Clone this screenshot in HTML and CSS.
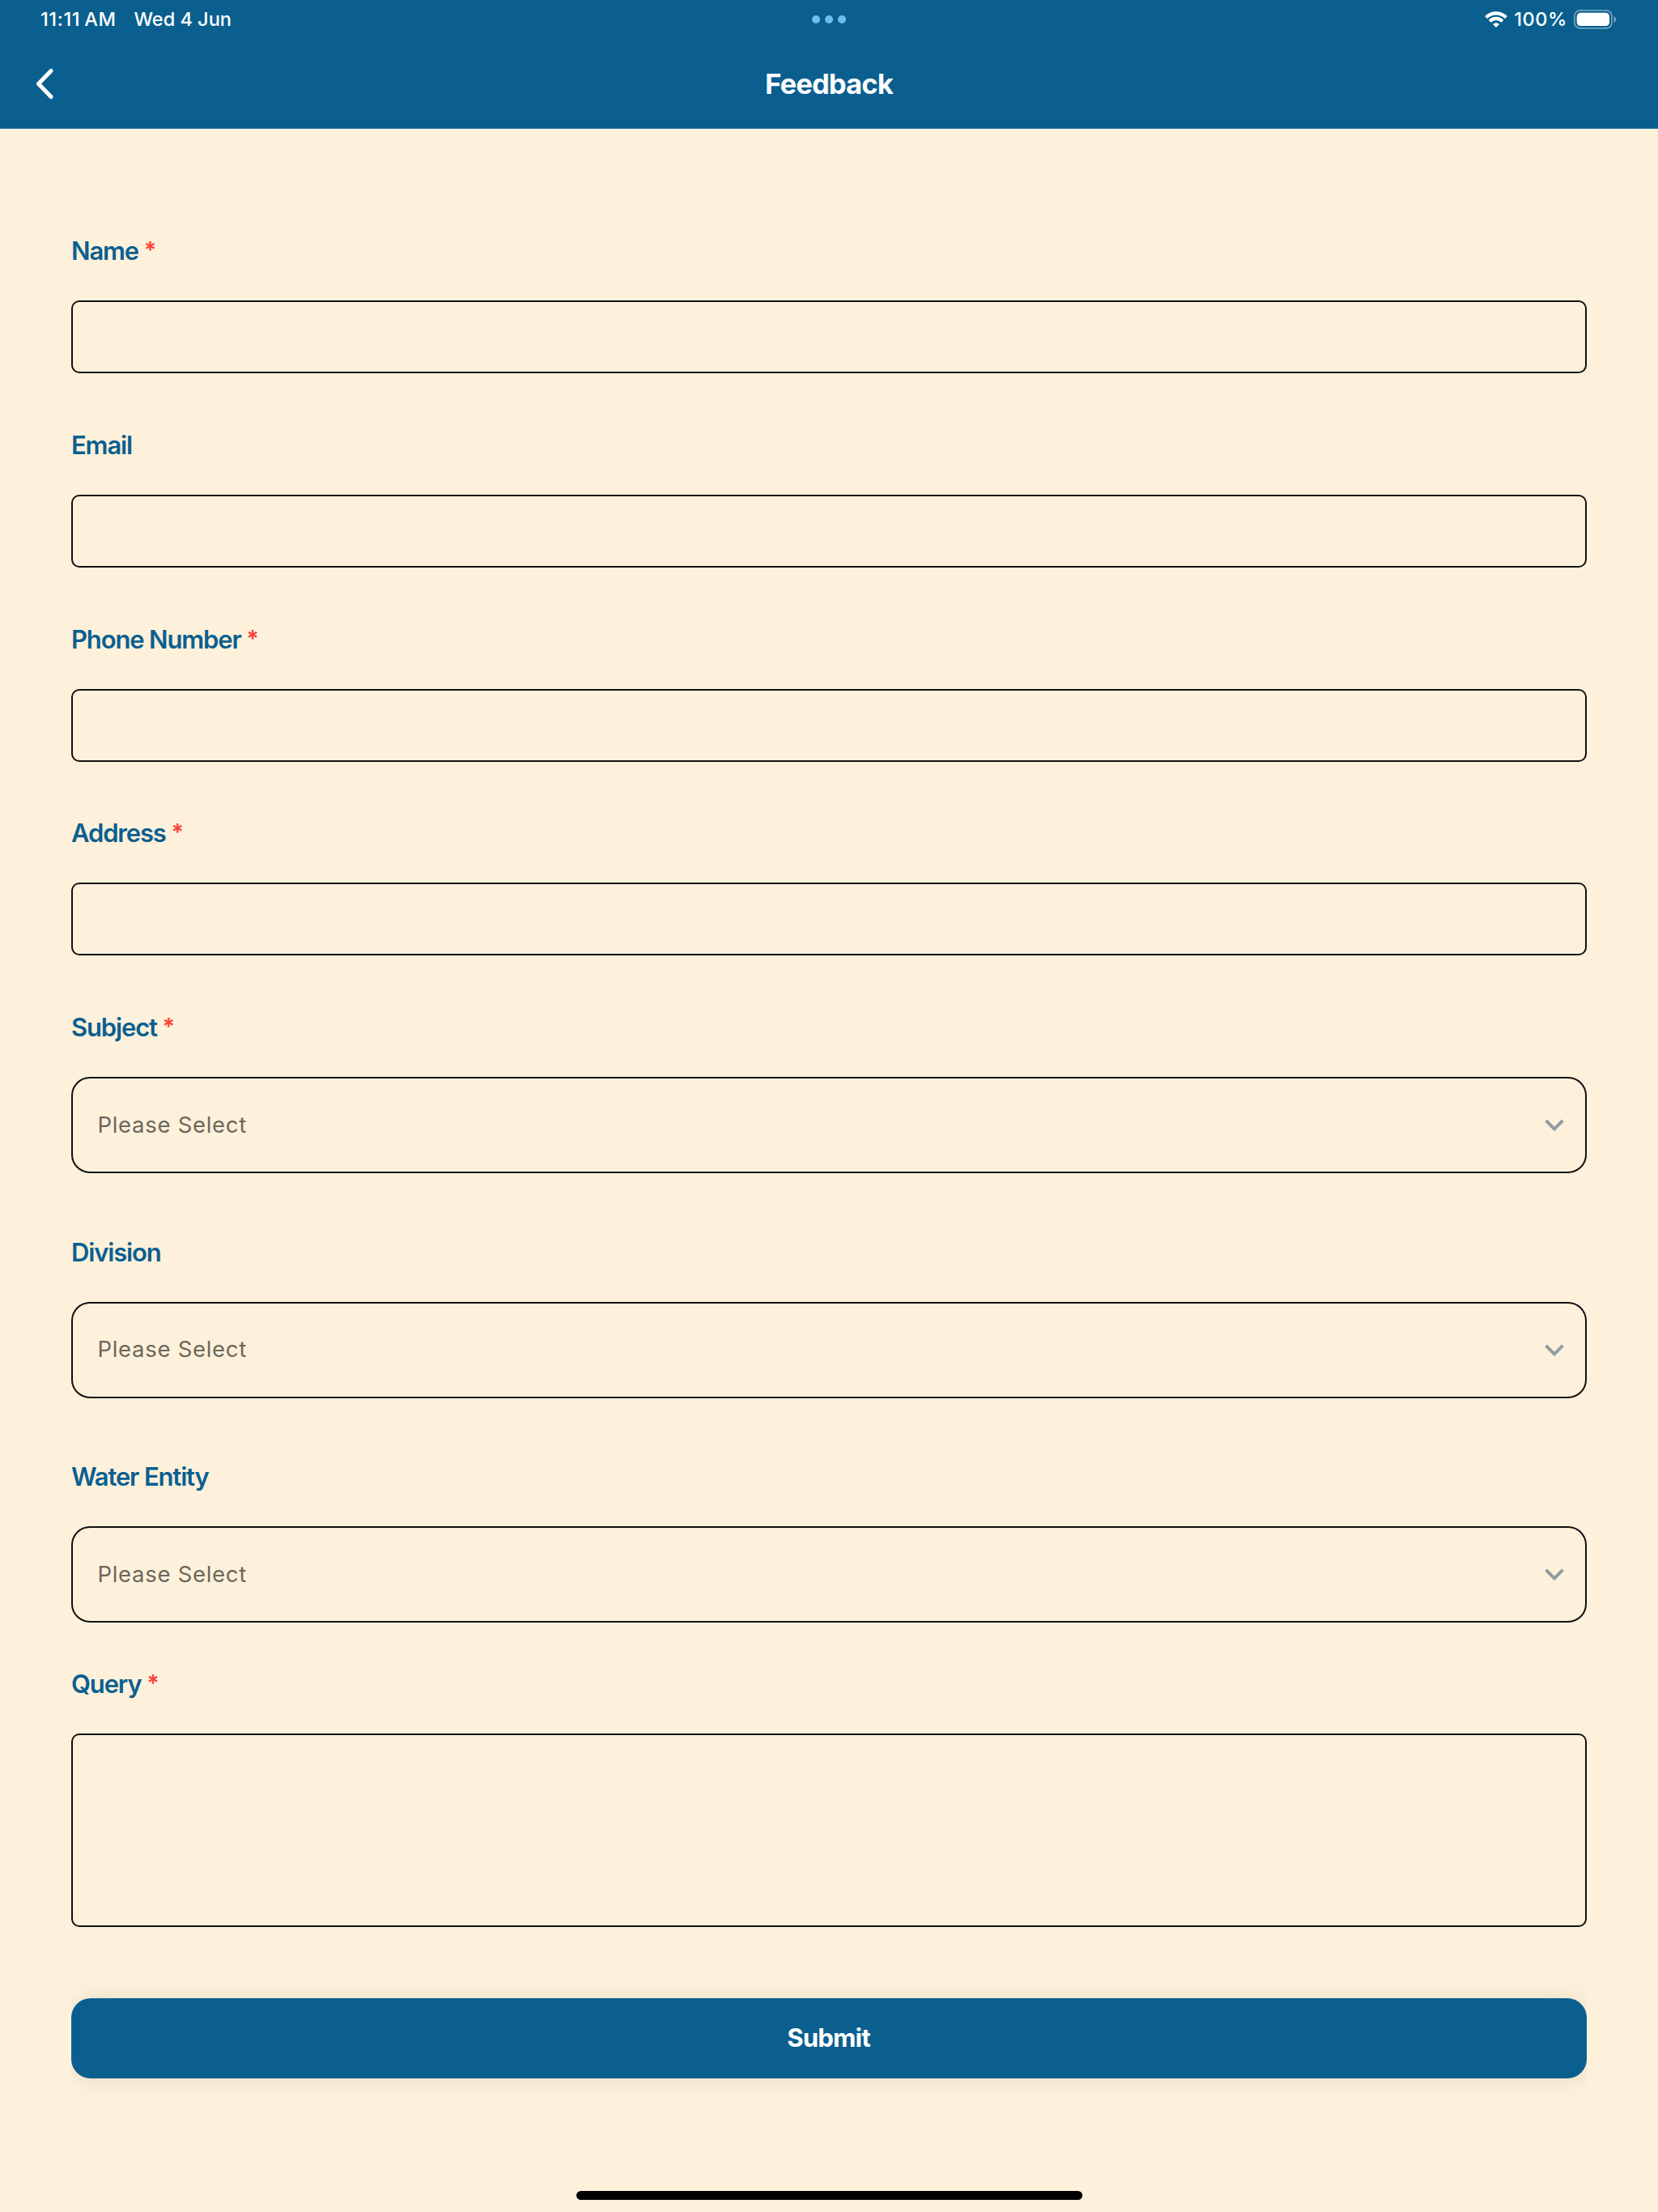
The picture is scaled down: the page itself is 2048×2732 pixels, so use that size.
FILE: index.html
```
<!DOCTYPE html>
<html lang="en">
<head>
    <meta charset="UTF-8">
    <meta name="viewport" content="width=device-width, initial-scale=1.0">
    <title>Feedback</title>
    <link rel="stylesheet" href="styles.css">
</head>
<body>
    <header class="header">
        <div class="status-bar">
            <div class="status-left">
                <span class="status-time">11:11<span class="status-ampm">AM</span></span>
                <span class="status-date">Wed 4 Jun</span>
            </div>
            <div class="status-dots">
                <span class="dot"></span>
                <span class="dot"></span>
                <span class="dot"></span>
            </div>
            <div class="status-right">
                <svg class="wifi-icon" width="28" height="20" viewBox="0 0 28 20" fill="none" stroke="#fff" stroke-width="4.2">
                    <path d="M1.6 7.4 A17.6 17.6 0 0 1 26.4 7.4"/>
                    <path d="M6.2 12.2 A11 11 0 0 1 21.8 12.2"/>
                    <path d="M14 20 L10 15.9 A5.6 5.6 0 0 1 18 15.9 Z" fill="#fff" stroke="none"/>
                </svg>
                <span class="status-percent">100%</span>
                <svg class="battery-icon" width="53" height="24" viewBox="0 0 53 24">
                    <rect x="0.9" y="0.9" width="46" height="22" rx="7" fill="none" stroke="#fff" stroke-opacity="0.42" stroke-width="1.7"/>
                    <rect x="3.7" y="3.8" width="40.3" height="16.3" rx="4.6" fill="#fff"/>
                    <path d="M49.5 8.3 C53.1 9.6 53.1 14.4 49.5 15.7 Z" fill="#fff" fill-opacity="0.45"/>
                </svg>
            </div>
        </div>
        <div class="nav-bar">
            <button class="back-button" aria-label="Back">
                <svg width="24" height="40" viewBox="0 0 24 40" fill="none" stroke="#fff" stroke-width="5" stroke-linecap="round" stroke-linejoin="round">
                    <path d="M20 3.4 L4.5 19.5 L20 35.6"/>
                </svg>
            </button>
            <h1 class="title">Feedback</h1>
        </div>
    </header>

    <form class="feedback-form">
        <div class="field">
            <label for="name">Name <span class="required">*</span></label>
            <input type="text" id="name">
        </div>

        <div class="field">
            <label for="email">Email</label>
            <input type="text" id="email">
        </div>

        <div class="field">
            <label for="phone">Phone Number <span class="required">*</span></label>
            <input type="text" id="phone">
        </div>

        <div class="field">
            <label for="address">Address <span class="required">*</span></label>
            <input type="text" id="address">
        </div>

        <div class="field field-select">
            <label>Subject <span class="required">*</span></label>
            <div class="dropdown">
                <span>Please Select</span>
                <svg class="chevron" width="24" height="16" viewBox="0 0 24 16"><path d="M1.6 1.9 L12 12.3 L22.4 1.9"/></svg>
            </div>
        </div>

        <div class="field field-select">
            <label>Division</label>
            <div class="dropdown">
                <span>Please Select</span>
                <svg class="chevron" width="24" height="16" viewBox="0 0 24 16"><path d="M1.6 1.9 L12 12.3 L22.4 1.9"/></svg>
            </div>
        </div>

        <div class="field field-last-select">
            <label>Water Entity</label>
            <div class="dropdown">
                <span>Please Select</span>
                <svg class="chevron" width="24" height="16" viewBox="0 0 24 16"><path d="M1.6 1.9 L12 12.3 L22.4 1.9"/></svg>
            </div>
        </div>

        <div class="field field-query">
            <label for="query">Query <span class="required">*</span></label>
            <textarea id="query"></textarea>
        </div>

        <button type="button" class="submit-button">Submit</button>
    </form>

    <div class="home-indicator"></div>
</body>
</html>
```
FILE: styles.css
```
* {
    box-sizing: border-box;
}
body {
    font-family: Inter, "Liberation Sans", sans-serif;
    margin: 0;
    height: 2732px;
    display: flex;
    flex-direction: column;
    background-color: #fef1db;
    overflow: hidden;
}
.header {
    height: 159px;
    background-color: #0b5f8f;
    color: #fff;
}
.status-bar {
    display: grid;
    grid-template-columns: 1fr auto 1fr;
    align-items: center;
    height: 48px;
    padding: 0 51px 0 50px;
    font-size: 23.5px;
    font-weight: 500;
    line-height: 48px;
}
.status-left {
    display: flex;
    gap: 22px;
}
.status-time {
    letter-spacing: 0.6px;
}
.status-ampm {
    margin-left: 5px;
}
.status-dots {
    display: flex;
    gap: 6px;
}
.dot {
    width: 10px;
    height: 10px;
    border-radius: 50%;
    background-color: #6bbfef;
}
.status-right {
    display: flex;
    justify-content: flex-end;
    align-items: center;
}
.status-percent {
    margin: 0 8px 0 8px;
    letter-spacing: 0.6px;
}
.nav-bar {
    display: grid;
    grid-template-columns: 1fr auto 1fr;
    align-items: center;
    height: 111px;
    padding: 0 43px;
}
.back-button {
    display: flex;
    width: 24px;
    padding: 0;
    border: none;
    background: none;
}
.title {
    margin: 0;
    font-size: 34.5px;
    font-weight: 700;
    line-height: 111px;
    letter-spacing: -0.8px;
}
.feedback-form {
    display: flex;
    flex-direction: column;
    padding: 131px 88px 0;
}
.field {
    display: flex;
    flex-direction: column;
    margin-bottom: 68.8px;
}
.field-select {
    margin-bottom: 77.6px;
}
.field-last-select {
    margin-bottom: 55.6px;
}
.field-query {
    margin-bottom: 88px;
}
label {
    height: 40px;
    margin-bottom: 41px;
    color: #0b5f8f;
    font-size: 31px;
    font-weight: 600;
    line-height: 40.5px;
    letter-spacing: -1.15px;
}
.required {
    color: #f8453a;
    font-size: 28px;
    font-weight: 700;
    line-height: 1;
    vertical-align: 2px;
}
input, textarea, .dropdown {
    width: 100%;
    border: 2px solid #111;
    border-radius: 10px;
    background: none;
}
input {
    height: 90px;
}
textarea {
    height: 239px;
    resize: none;
}
.dropdown {
    display: flex;
    justify-content: space-between;
    align-items: center;
    height: 119px;
    padding: 0 26px 2px 30.5px;
    border-radius: 23px;
    color: #6c675c;
    font-size: 27.5px;
    letter-spacing: 0.7px;
}
.chevron {
    margin-top: 3px;
}
.chevron path {
    fill: none;
    stroke: #919ca2;
    stroke-width: 4;
}
.submit-button {
    height: 99px;
    padding: 0 1px 2px 0;
    border: none;
    border-radius: 24px;
    background-color: #0b5f8f;
    box-shadow: 0 2px 30px rgba(0, 0, 0, 0.09);
    clip-path: inset(-40px 0);
    color: #fff;
    font-family: inherit;
    font-size: 31px;
    font-weight: 700;
    letter-spacing: -0.8px;
}
.home-indicator {
    width: 625px;
    height: 11px;
    margin: auto auto 15px;
    border-radius: 6px;
    background-color: #000;
}
```
